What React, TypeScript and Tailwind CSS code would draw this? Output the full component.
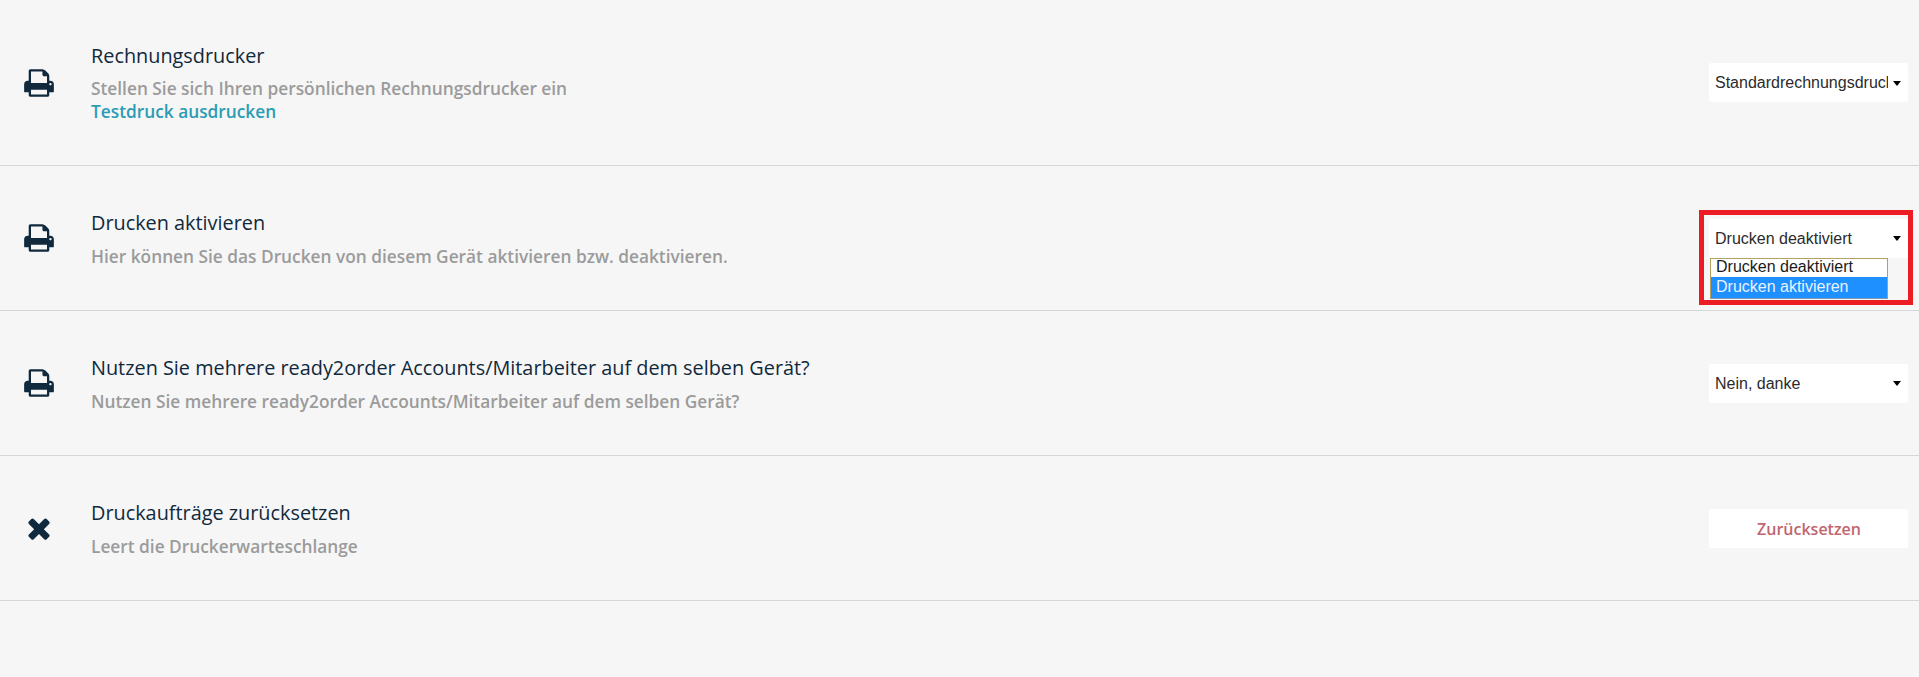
import React from 'react';

const PRINT_PATH =
  'M448 1536h896v-256h-896v256zm0-640h896v-384h-160q-40 0-68-28t-28-68v-160h-640v640zm1152 64q0-26-19-45t-45-19-45 19-19 45 19 45 45 19 45-19 19-45zm128 0v416q0 13-9.5 22.5t-22.5 9.5h-224v160q0 40-28 68t-68 28h-960q-40 0-68-28t-28-68v-160h-224q-13 0-22.5-9.5t-9.5-22.5v-416q0-79 56.5-135.5t135.5-56.5h64v-544q0-40 28-68t68-28h672q40 0 88 20t76 48l152 152q28 28 48 76t20 88v256h64q79 0 135.5 56.5t56.5 135.5z';
const TIMES_PATH =
  'M1490 1322q0 40-28 68l-136 136q-28 28-68 28t-68-28l-294-294-294 294q-28 28-68 28t-68-28l-136-136q-28-28-28-68t28-68l294-294-294-294q-28-28-28-68t28-68l136-136q28-28 68-28t68 28l294 294 294-294q28-28 68-28t68 28l136 136q28 28 28 68t-28 68l-294 294 294 294q28 28 28 68z';

function Icon({ path }: { path: string }) {
  return (
    <svg viewBox="0 0 1792 1792" className="w-8 h-8 fill-[#10293c]">
      <path d={path} />
    </svg>
  );
}

function Caret() {
  return <span className="w-0 h-0 border-x-[4.5px] border-x-transparent border-t-[5px] border-t-black shrink-0" />;
}

function Select({ value, children }: { value: string; children?: React.ReactNode }) {
  return (
    <div className="relative w-[199px] h-[39px] bg-white rounded-[2px] flex items-center justify-between pl-[6px] pr-[7px] pt-[1px] font-['Liberation_Sans',sans-serif] text-[16px] text-[#2b2b2b]">
      <span className="w-[173px] overflow-hidden whitespace-nowrap">{value}</span>
      <Caret />
      {children}
    </div>
  );
}

function Row({
  icon,
  title,
  desc,
  link,
  control,
  height,
  top,
}: {
  icon: string;
  title: string;
  desc: string;
  link?: string;
  control: React.ReactNode;
  height: string;
  top: string;
}) {
  return (
    <div className={`flex items-center border-b border-[#d6d6d6] pr-[11px] ${height}`}>
      <div className="w-[91px] pl-[23px] shrink-0">
        <Icon path={icon} />
      </div>
      <div className={`flex-1 self-start ${top}`}>
        <div className="text-[19.85px] leading-[26px] text-[#10293c] font-normal">{title}</div>
        <div className={`${link ? 'mt-[8px]' : 'mt-[9px]'} text-[17.3px] leading-[23px] font-semibold text-[#9b9b9b]`}>
          {desc}
        </div>
        {link && <div className="text-[17.3px] leading-[23px] font-semibold text-[#2a9cb5]">{link}</div>}
      </div>
      {control}
    </div>
  );
}

export default function App() {
  return (
    <div className="h-[677px] overflow-hidden bg-[#f6f6f6] font-['Open_Sans',sans-serif]">
      <Row
        height="h-[166px]"
        top="pt-[43px]"
        icon={PRINT_PATH}
        title="Rechnungsdrucker"
        desc="Stellen Sie sich Ihren persönlichen Rechnungsdrucker ein"
        link="Testdruck ausdrucken"
        control={<Select value="Standardrechnungsdrucker" />}
      />
      <Row
        height="h-[145px]"
        top="pt-[44px]"
        icon={PRINT_PATH}
        title="Drucken aktivieren"
        desc="Hier können Sie das Drucken von diesem Gerät aktivieren bzw. deaktivieren."
        control={
          <Select value="Drucken deaktiviert">
            {/* open dropdown + red annotation box sit on top of the row */}
            <div className="absolute left-[1px] top-[39px] w-[178px] h-[41px] border border-[#b3a15f] border-b-[#7f9db9] bg-white text-[16px] leading-[19px] text-[#1a1a1a]">
              <div className="pl-[5px] h-[19px] -mt-[2px] mb-[1px]">Drucken deaktiviert</div>
              <div className="pl-[5px] h-[21px] bg-[#1e90ff] text-[#e8f3ff]">Drucken aktivieren</div>
            </div>
            <div className="absolute -left-[10px] -top-[9px] w-[214px] h-[95px] border-[5px] border-[#ed1c24] pointer-events-none" />
          </Select>
        }
      />
      <Row
        height="h-[145px]"
        top="pt-[44px]"
        icon={PRINT_PATH}
        title="Nutzen Sie mehrere ready2order Accounts/Mitarbeiter auf dem selben Gerät?"
        desc="Nutzen Sie mehrere ready2order Accounts/Mitarbeiter auf dem selben Gerät?"
        control={<Select value="Nein, danke" />}
      />
      <Row
        height="h-[145px]"
        top="pt-[44px]"
        icon={TIMES_PATH}
        title="Druckaufträge zurücksetzen"
        desc="Leert die Druckerwarteschlange"
        control={
          <button className="w-[199px] h-[39px] bg-white rounded-[2px] pt-[1px] pl-[1px] text-[16px] font-semibold text-[#c0666f]">
            Zurücksetzen
          </button>
        }
      />
    </div>
  );
}
